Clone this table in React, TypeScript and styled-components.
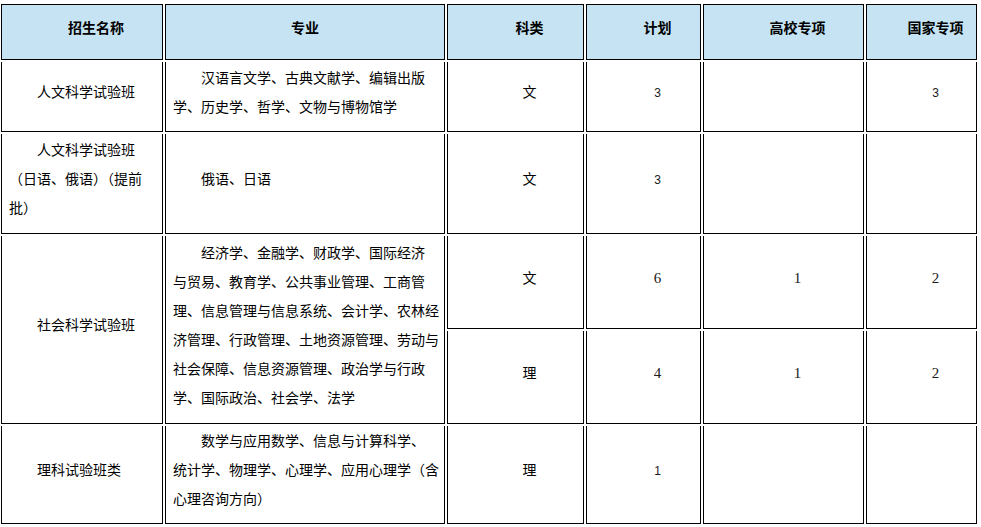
import * as React from "react"
import styled, { createGlobalStyle } from "styled-components"

const GlobalStyle = createGlobalStyle`
    body {
        margin: 0;
        background: #fff;
        color: #000;
        font-family: "Noto Sans CJK SC", "Noto Sans", sans-serif;
    }
`

const Table = styled.table`
    table-layout: fixed;
    width: 980px;
    margin: 2px 0 0 -1px;
    border-collapse: separate;
    border-spacing: 2px;
    font-size: 14px;
`

const Col = styled.col<{ $w: number }>`
    width: ${p => p.$w}px;
`

const Row = styled.tr<{ $h: number }>`
    height: ${p => p.$h}px;
`

const HeadCell = styled.th<{ $noIndent?: boolean }>`
    background: #c5e3f2;
    border: 1px solid #000;
    padding: 0 4px 10px;
    font-weight: 700;
    line-height: 20px;
    text-align: center;
    text-indent: ${p => p.$noIndent ? 0 : '2em'};
    vertical-align: middle;
    white-space: nowrap;
`

const Cell = styled.td<{ $left?: boolean }>`
    border: 1px solid #000;
    border-top: none;
    padding: 0 7px 10px;
    text-align: ${p => p.$left ? 'left' : 'center'};
    text-indent: 2em;
    line-height: 29px;
    vertical-align: middle;
    white-space: nowrap;
`

const Num = styled.span<{ $serif?: boolean }>`
    font-family: ${p => p.$serif ? '"Liberation Serif", serif' : '"Liberation Sans", sans-serif'};
    font-size: ${p => p.$serif ? 15 : 12}px;
    line-height: 1;
    color: #1a1a1a;
`

const App = (): JSX.Element => {
    return (
        <>
            <GlobalStyle />
            <Table>
                <colgroup>
                    <Col $w={162} />
                    <Col $w={280} />
                    <Col $w={137} />
                    <Col $w={115} />
                    <Col $w={161} />
                    <Col $w={111} />
                </colgroup>
                <thead>
                    <Row $h={56}>
                        <HeadCell>招生名称</HeadCell>
                        <HeadCell $noIndent>专业</HeadCell>
                        <HeadCell>科类</HeadCell>
                        <HeadCell>计划</HeadCell>
                        <HeadCell>高校专项</HeadCell>
                        <HeadCell>国家专项</HeadCell>
                    </Row>
                </thead>
                <tbody>
                    <Row $h={70}>
                        <Cell $left>人文科学试验班</Cell>
                        <Cell $left>
                            汉语言文学、古典文献学、编辑出版<br />
                            学、历史学、哲学、文物与博物馆学
                        </Cell>
                        <Cell>文</Cell>
                        <Cell><Num>3</Num></Cell>
                        <Cell />
                        <Cell><Num>3</Num></Cell>
                    </Row>
                    <Row $h={100}>
                        <Cell $left>
                            人文科学试验班<br />
                            （日语、俄语）（提前<br />
                            批）
                        </Cell>
                        <Cell $left>俄语、日语</Cell>
                        <Cell>文</Cell>
                        <Cell><Num>3</Num></Cell>
                        <Cell />
                        <Cell />
                    </Row>
                    <Row $h={93}>
                        <Cell $left rowSpan={2}>社会科学试验班</Cell>
                        <Cell $left rowSpan={2}>
                            经济学、金融学、财政学、国际经济<br />
                            与贸易、教育学、公共事业管理、工商管<br />
                            理、信息管理与信息系统、会计学、农林经<br />
                            济管理、行政管理、土地资源管理、劳动与<br />
                            社会保障、信息资源管理、政治学与行政<br />
                            学、国际政治、社会学、法学
                        </Cell>
                        <Cell>文</Cell>
                        <Cell><Num $serif>6</Num></Cell>
                        <Cell><Num $serif>1</Num></Cell>
                        <Cell><Num $serif>2</Num></Cell>
                    </Row>
                    <Row $h={93}>
                        <Cell>理</Cell>
                        <Cell><Num $serif>4</Num></Cell>
                        <Cell><Num $serif>1</Num></Cell>
                        <Cell><Num $serif>2</Num></Cell>
                    </Row>
                    <Row $h={98}>
                        <Cell $left>理科试验班类</Cell>
                        <Cell $left>
                            数学与应用数学、信息与计算科学、<br />
                            统计学、物理学、心理学、应用心理学（含<br />
                            心理咨询方向）
                        </Cell>
                        <Cell>理</Cell>
                        <Cell><Num>1</Num></Cell>
                        <Cell />
                        <Cell />
                    </Row>
                </tbody>
            </Table>
        </>
    )
}

export default App
